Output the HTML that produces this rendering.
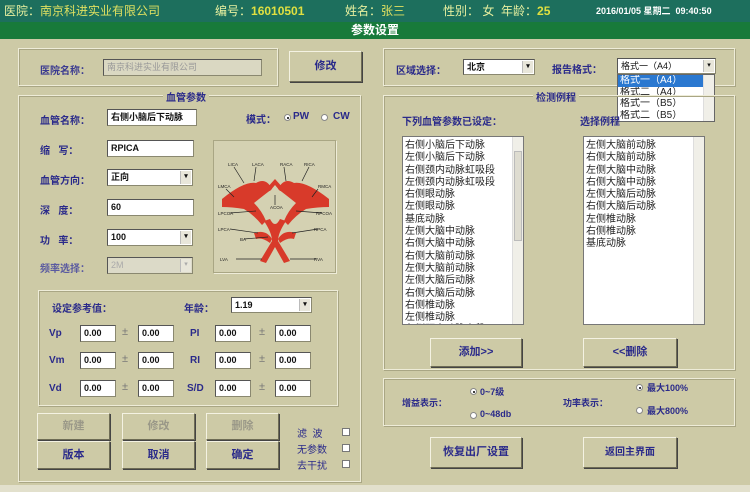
<!DOCTYPE html>
<html><head><meta charset="utf-8">
<style>
*{margin:0;padding:0;box-sizing:border-box}
body{width:750px;height:492px;background:#cdcaa6;position:relative;overflow:hidden;font-family:"Liberation Sans","Noto Sans CJK SC",sans-serif;}
.a{position:absolute}
.top{left:0;top:0;width:750px;height:22px;background:#1d6f5d;color:#e8f0a0;font-size:12px;line-height:22px;white-space:nowrap}
.title{left:0;top:22px;width:750px;height:17px;background:#187a3a;color:#fff;font-size:12px;line-height:17px;text-align:center;font-weight:bold}
.grp{border:1px solid #eeecd8;box-shadow:inset 1px 1px 0 #a9a684,1px 1px 0 #a9a684}
.lbl{color:#2a2a8a;font-size:10px;font-weight:bold;white-space:nowrap}
.inp{background:#fff;border:1px solid #8a8870;border-top-color:#555;border-left-color:#555;font-size:9px;font-weight:bold;line-height:15px;padding-left:3px;white-space:nowrap;overflow:hidden;color:#111}
.btn{background:#cdcaa6;border:1px solid;border-color:#f4f2e2 #6e6c55 #6e6c55 #f4f2e2;box-shadow:1px 1px 0 #444;color:#2a2a8a;font-size:11px;font-weight:bold;text-align:center;white-space:nowrap}
.dis{color:#9a9888}
.arr{position:absolute;right:1px;top:1px;width:11px;bottom:1px;background:#e8e6da;border-left:1px solid #bbb;font-size:7px;text-align:center;line-height:12px}
.list{background:#fff;border:1px solid #777;font-size:10px;line-height:12.3px;color:#222;padding:3px 0 0 2px;overflow:hidden;white-space:nowrap}
.sb{position:absolute;right:0;top:0;bottom:0;width:11px;background:#f0efe8;border-left:1px solid #ddd}
.chk{width:8px;height:8px;background:#fff;border:1px solid #777}
.rad{width:7px;height:7px;border-radius:50%;background:#fff;border:1px solid #888}
.rad.on::after{content:"";position:absolute;left:1.5px;top:1.5px;width:2px;height:2px;background:#000;border-radius:50%}
.dd div.it{height:11.5px;line-height:11.5px;overflow:hidden;padding-left:2px;width:86px}
</style></head><body>
<div class="a top"><span class="a" style="left:4px">医院：<span style="color:#e0e060">南京科进实业有限公司</span></span><span class="a" style="left:215px">编号：<b style="color:#e0e040">16010501</b></span><span class="a" style="left:345px">姓名：<span style="color:#e0e060">张三</span></span><span class="a" style="left:443px">性别： 女 &nbsp;年龄：<b style="color:#e0e040">25</b></span><span class="a" style="left:596px;font-size:9px;font-weight:bold;color:#fff">2016/01/05 星期二 &nbsp;09:40:50</span></div>
<div class="a title">参数设置</div>

<div class="a grp" style="left:18px;top:48px;width:260px;height:38px"></div>
<div class="a lbl" style="left:40px;top:62px;color:#3a3a90">医院名称：</div>
<div class="a inp" style="left:103px;top:59px;width:159px;height:17px;background:#dad8c2;color:#999;font-weight:normal">南京科进实业有限公司</div>
<div class="a btn" style="left:289px;top:51px;width:73px;height:31px;line-height:29px">修改</div>

<div class="a grp" style="left:383px;top:48px;width:352px;height:38px"></div>
<div class="a lbl" style="left:396px;top:62px">区域选择：</div>
<div class="a inp" style="left:463px;top:59px;width:72px;height:16px">北京<div class="arr">▾</div></div>
<div class="a lbl" style="left:552px;top:61px">报告格式：</div>
<div class="a inp" style="left:617px;top:58px;width:99px;height:16px;font-weight:normal">格式一（A4）<div class="arr">▾</div></div>
<div class="a dd" style="left:617px;top:74px;width:98px;height:48px;background:#fff;border:1px solid #666;font-size:10px;color:#222;white-space:nowrap;overflow:hidden">
<div class="it" style="background:#2a78d0;color:#fff">格式一（A4）</div><div class="it">格式二（A4）</div><div class="it">格式一（B5）</div><div class="it">格式二（B5）</div><div class="sb"></div></div>

<!-- left vessel group -->
<div class="a grp" style="left:18px;top:95px;width:343px;height:387px"></div>
<div class="a lbl" style="left:163px;top:89px;background:#cdcaa6;padding:0 3px">血管参数</div>
<div class="a lbl" style="left:40px;top:112px">血管名称：</div>
<div class="a inp" style="left:107px;top:109px;width:90px;height:17px">右侧小脑后下动脉</div>
<div class="a lbl" style="left:246px;top:111px">模式：</div>
<div class="a rad on" style="left:284px;top:114px"></div><div class="a lbl" style="left:293px;top:111px">PW</div>
<div class="a rad" style="left:321px;top:114px"></div><div class="a lbl" style="left:333px;top:111px">CW</div>
<div class="a lbl" style="left:40px;top:142px">缩 &nbsp; 写：</div>
<div class="a inp" style="left:107px;top:140px;width:87px;height:17px">RPICA</div>
<div class="a lbl" style="left:40px;top:172px">血管方向：</div>
<div class="a inp" style="left:107px;top:169px;width:86px;height:17px">正向<div class="arr">▾</div></div>
<div class="a lbl" style="left:40px;top:202px">深 &nbsp; 度：</div>
<div class="a inp" style="left:107px;top:199px;width:87px;height:17px">60</div>
<div class="a lbl" style="left:40px;top:232px">功 &nbsp; 率：</div>
<div class="a inp" style="left:107px;top:229px;width:86px;height:17px">100<div class="arr">▾</div></div>
<div class="a lbl" style="left:40px;top:260px;color:#5a5aa0">频率选择：</div>
<div class="a inp" style="left:107px;top:257px;width:86px;height:17px;background:#dcdac8;color:#aaa;font-weight:normal">2M<div class="arr">▾</div></div>

<div class="a" style="left:213px;top:140px;width:123px;height:133px;background:#d4d1b2;border:1px solid #a9a684;box-shadow:1px 1px 0 #eeecd8">
<svg width="123" height="133" viewBox="0 0 123 133">
<g fill="#d83a2a" stroke="none">
<path d="M8 58 Q30 40 42 42 Q52 36 58 48 Q50 54 40 62 Q48 70 52 80 L48 84 Q40 74 30 68 Q18 66 8 66Z"/>
<path d="M115 58 Q92 40 80 42 Q70 36 64 48 Q72 54 82 62 Q74 70 70 80 L74 84 Q82 74 92 68 Q104 66 115 66Z"/>
<path d="M50 80 Q58 92 58 100 L46 120 L52 122 L61 106 L70 122 L76 120 L64 100 Q64 92 72 80 L66 78 Q61 88 56 78Z"/>
<path d="M40 92 Q52 88 58 98 L56 102 Q48 96 42 98Z"/>
<path d="M82 92 Q70 88 64 98 L66 102 Q74 96 80 98Z"/>
<path d="M52 48 L61 38 L70 48 L66 50 L61 44 L56 50Z"/>
</g>
<g stroke="#222" stroke-width="0.7" fill="none">
<path d="M20 26 L30 42 M42 26 L40 40 M70 26 L72 40 M95 26 L88 40 M12 48 L20 56 M104 48 L98 56 M61 64 L61 54 M16 72 L42 70 M108 72 L82 70 M16 88 L44 92 M104 88 L78 92 M30 98 L54 96 M22 118 L48 118 M102 118 L76 118"/>
</g>
<g font-size="4.5" fill="#222" font-family="Liberation Sans">
<text x="14" y="25">LICA</text><text x="38" y="25">LACA</text><text x="66" y="25">RACA</text><text x="90" y="25">RICA</text>
<text x="4" y="47">LMCA</text><text x="104" y="47">RMCA</text><text x="56" y="68">ACOA</text>
<text x="4" y="74">LPCOA</text><text x="102" y="74">RPCOA</text><text x="4" y="90">LPCA</text><text x="100" y="90">RPCA</text>
<text x="26" y="100">BA</text><text x="6" y="120">LVA</text><text x="100" y="120">RVA</text></g></svg></div>

<div class="a grp" style="left:38px;top:290px;width:300px;height:116px"></div>
<div class="a lbl" style="left:52px;top:300px">设定参考值：</div>
<div class="a lbl" style="left:184px;top:300px">年龄：</div>
<div class="a inp" style="left:231px;top:297px;width:81px;height:16px">1.19<div class="arr">▾</div></div>
<div class="a lbl" style="left:49px;top:328px">Vp</div><div class="a lbl" style="left:49px;top:355px">Vm</div><div class="a lbl" style="left:49px;top:383px">Vd</div>
<div class="a lbl" style="left:190px;top:328px">PI</div><div class="a lbl" style="left:190px;top:355px">RI</div><div class="a lbl" style="left:187px;top:383px">S/D</div>
<div class="a inp" style="left:80px;top:325px;width:36px;height:17px">0.00</div><div class="a" style="left:122px;top:326px;font-size:11px;color:#777">±</div><div class="a inp" style="left:138px;top:325px;width:36px;height:17px">0.00</div>
<div class="a inp" style="left:80px;top:352px;width:36px;height:17px">0.00</div><div class="a" style="left:122px;top:353px;font-size:11px;color:#777">±</div><div class="a inp" style="left:138px;top:352px;width:36px;height:17px">0.00</div>
<div class="a inp" style="left:80px;top:380px;width:36px;height:17px">0.00</div><div class="a" style="left:122px;top:381px;font-size:11px;color:#777">±</div><div class="a inp" style="left:138px;top:380px;width:36px;height:17px">0.00</div>
<div class="a inp" style="left:215px;top:325px;width:36px;height:17px">0.00</div><div class="a" style="left:259px;top:326px;font-size:11px;color:#777">±</div><div class="a inp" style="left:275px;top:325px;width:36px;height:17px">0.00</div>
<div class="a inp" style="left:215px;top:352px;width:36px;height:17px">0.00</div><div class="a" style="left:259px;top:353px;font-size:11px;color:#777">±</div><div class="a inp" style="left:275px;top:352px;width:36px;height:17px">0.00</div>
<div class="a inp" style="left:215px;top:380px;width:36px;height:17px">0.00</div><div class="a" style="left:259px;top:381px;font-size:11px;color:#777">±</div><div class="a inp" style="left:275px;top:380px;width:36px;height:17px">0.00</div>

<div class="a btn dis" style="left:37px;top:413px;width:73px;height:27px;line-height:25px">新建</div>
<div class="a btn dis" style="left:122px;top:413px;width:73px;height:27px;line-height:25px">修改</div>
<div class="a btn dis" style="left:206px;top:413px;width:73px;height:27px;line-height:25px">删除</div>
<div class="a btn" style="left:37px;top:441px;width:73px;height:28px;line-height:26px">版本</div>
<div class="a btn" style="left:122px;top:441px;width:73px;height:28px;line-height:26px">取消</div>
<div class="a btn" style="left:206px;top:441px;width:73px;height:28px;line-height:26px">确定</div>
<div class="a lbl" style="left:297px;top:425px;font-weight:normal">滤 &nbsp;波</div><div class="a chk" style="left:342px;top:428px"></div>
<div class="a lbl" style="left:297px;top:441px;font-weight:normal">无参数</div><div class="a chk" style="left:342px;top:444px"></div>
<div class="a lbl" style="left:297px;top:457px;font-weight:normal">去干扰</div><div class="a chk" style="left:342px;top:460px"></div>

<!-- right routine group -->
<div class="a grp" style="left:383px;top:95px;width:352px;height:275px"></div>
<div class="a lbl" style="left:533px;top:89px;background:#cdcaa6;padding:0 3px">检测例程</div>
<div class="a lbl" style="left:402px;top:113px">下列血管参数已设定：</div>
<div class="a lbl" style="left:580px;top:113px">选择例程</div>
<div class="a list" style="left:402px;top:136px;width:122px;height:189px">右侧小脑后下动脉<br>左侧小脑后下动脉<br>右侧颈内动脉虹吸段<br>左侧颈内动脉虹吸段<br>右侧眼动脉<br>左侧眼动脉<br>基底动脉<br>左侧大脑中动脉<br>右侧大脑中动脉<br>右侧大脑前动脉<br>左侧大脑前动脉<br>左侧大脑后动脉<br>右侧大脑后动脉<br>右侧椎动脉<br>左侧椎动脉<br>左侧颈内动脉末段<div class="sb"><div style="position:absolute;left:1px;top:14px;width:8px;height:90px;background:#dedcd0;border:1px solid #bbb"></div></div></div>
<div class="a list" style="left:583px;top:136px;width:122px;height:189px">左侧大脑前动脉<br>右侧大脑前动脉<br>左侧大脑中动脉<br>右侧大脑中动脉<br>左侧大脑后动脉<br>右侧大脑后动脉<br>左侧椎动脉<br>右侧椎动脉<br>基底动脉<div class="sb"></div></div>
<div class="a btn" style="left:430px;top:338px;width:92px;height:29px;line-height:27px">添加&gt;&gt;</div>
<div class="a btn" style="left:583px;top:338px;width:94px;height:29px;line-height:27px">&lt;&lt;删除</div>

<div class="a grp" style="left:383px;top:378px;width:352px;height:48px"></div>
<div class="a lbl" style="left:402px;top:396px;font-size:9px">增益表示：</div>
<div class="a rad on" style="left:470px;top:388px"></div><div class="a lbl" style="left:480px;top:385px;font-size:9px">0~7级</div>
<div class="a rad" style="left:470px;top:412px"></div><div class="a lbl" style="left:480px;top:409px;font-size:9px">0~48db</div>
<div class="a lbl" style="left:563px;top:396px;font-size:9px">功率表示：</div>
<div class="a rad on" style="left:636px;top:384px"></div><div class="a lbl" style="left:647px;top:381px;font-size:9px">最大100%</div>
<div class="a rad" style="left:636px;top:407px"></div><div class="a lbl" style="left:647px;top:404px;font-size:9px">最大800%</div>

<div class="a btn" style="left:430px;top:437px;width:92px;height:31px;line-height:29px">恢复出厂设置</div>
<div class="a btn" style="left:583px;top:437px;width:94px;height:31px;line-height:29px;font-size:10px">返回主界面</div>
<div class="a" style="left:0;top:485px;width:750px;height:7px;background:#e2e0cc"></div>
</body></html>
